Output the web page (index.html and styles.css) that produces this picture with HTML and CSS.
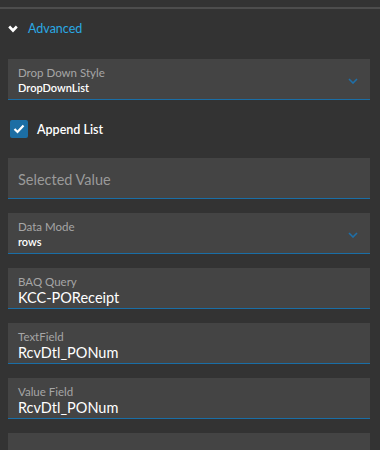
FILE: index.html
```html
<!DOCTYPE html>
<html lang="en">
<head>
    <meta charset="UTF-8">
    <meta name="viewport" content="width=device-width, initial-scale=1.0">
    <title>Advanced</title>
    <link rel="stylesheet" href="styles.css">
</head>
<body>

<div class="panel">
    <div class="section-head">
        <svg class="head-chevron" width="10" height="8" viewBox="0 0 10 8">
            <path d="M1.2 1.5 L5 5.5 L8.8 1.5" fill="none" stroke="#fff" stroke-width="2.6"/>
        </svg>
        <span class="head-title">Advanced</span>
    </div>

    <div class="fields">
        <div class="field select">
            <div class="field-body">
                <span class="field-label">Drop Down Style</span>
                <span class="field-value small">DropDownList</span>
            </div>
            <svg class="select-chevron" width="10" height="6" viewBox="0 0 10 6">
                <path d="M1 1 L5 5 L9 1" fill="none" stroke="#1e6fa8" stroke-width="1.6"/>
            </svg>
        </div>

        <label class="check-row">
            <span class="check-box">
                <svg width="12" height="10" viewBox="0 0 12 10">
                    <path d="M1.5 5 L4.5 8 L10.5 1.5" fill="none" stroke="#fff" stroke-width="2.2"/>
                </svg>
            </span>
            <span class="check-label">Append List</span>
        </label>

        <div class="field empty">
            <span class="placeholder">Selected Value</span>
        </div>

        <div class="field select">
            <div class="field-body">
                <span class="field-label">Data Mode</span>
                <span class="field-value small">rows</span>
            </div>
            <svg class="select-chevron" width="10" height="6" viewBox="0 0 10 6">
                <path d="M1 1 L5 5 L9 1" fill="none" stroke="#1e6fa8" stroke-width="1.6"/>
            </svg>
        </div>

        <div class="field">
            <div class="field-body">
                <span class="field-label">BAQ Query</span>
                <span class="field-value">KCC-POReceipt</span>
            </div>
        </div>

        <div class="field">
            <div class="field-body">
                <span class="field-label">TextField</span>
                <span class="field-value">RcvDtl_PONum</span>
            </div>
        </div>

        <div class="field">
            <div class="field-body">
                <span class="field-label">Value Field</span>
                <span class="field-value">RcvDtl_PONum</span>
            </div>
        </div>

        <div class="field blank"></div>
    </div>
</div>

</body>
</html>
```

FILE: styles.css
```css
body {
    font-family: Lato, "Liberation Sans", sans-serif;
    background-color: #333;
    margin: 0;
    height: 450px;
    overflow: hidden;
}

.panel {
    padding-top: 7px;
}

.section-head {
    display: flex;
    align-items: center;
    height: 40px;
    padding-left: 8px;
    border-top: 2px solid #4d4d4d;
    box-sizing: border-box;
    margin-bottom: 12px;
}

.head-chevron {
    margin-right: 10px;
    margin-top: 1px;
}

.head-title {
    color: #2aa9e3;
    font-size: 12.5px;
}

.fields {
    padding: 0 10px 0 8px;
}

.field {
    display: flex;
    align-items: center;
    height: 40px;
    background-color: #444;
    border-bottom: 1px solid #1a6ea6;
    margin-bottom: 14px;
    padding: 0 12px 0 10px;
}

.field-body {
    flex: 1;
    display: flex;
    flex-direction: column;
    align-self: flex-start;
    padding-top: 6px;
}

.field-label {
    color: #a6a6a6;
    font-size: 11.5px;
    line-height: 15px;
}

.field-value {
    color: #fff;
    font-size: 14.5px;
    line-height: 17px;
}

.field-value.small {
    font-size: 11px;
    line-height: 15px;
    font-weight: 600;
}

.select-chevron {
    margin-top: 4px;
}

.placeholder {
    color: #9a9a9a;
    font-size: 14.5px;
    margin-top: 3px;
}

.field.blank {
    border-bottom: none;
}

.check-row {
    display: flex;
    align-items: center;
    height: 58px;
    margin-top: -14px;
    padding-left: 2px;
}

.check-box {
    width: 18px;
    height: 18px;
    background-color: #1c6ea4;
    border-radius: 2px;
    display: flex;
    align-items: center;
    justify-content: center;
    margin-right: 9px;
}

.check-label {
    color: #fff;
    font-size: 12.5px;
    font-weight: 600;
}
```
